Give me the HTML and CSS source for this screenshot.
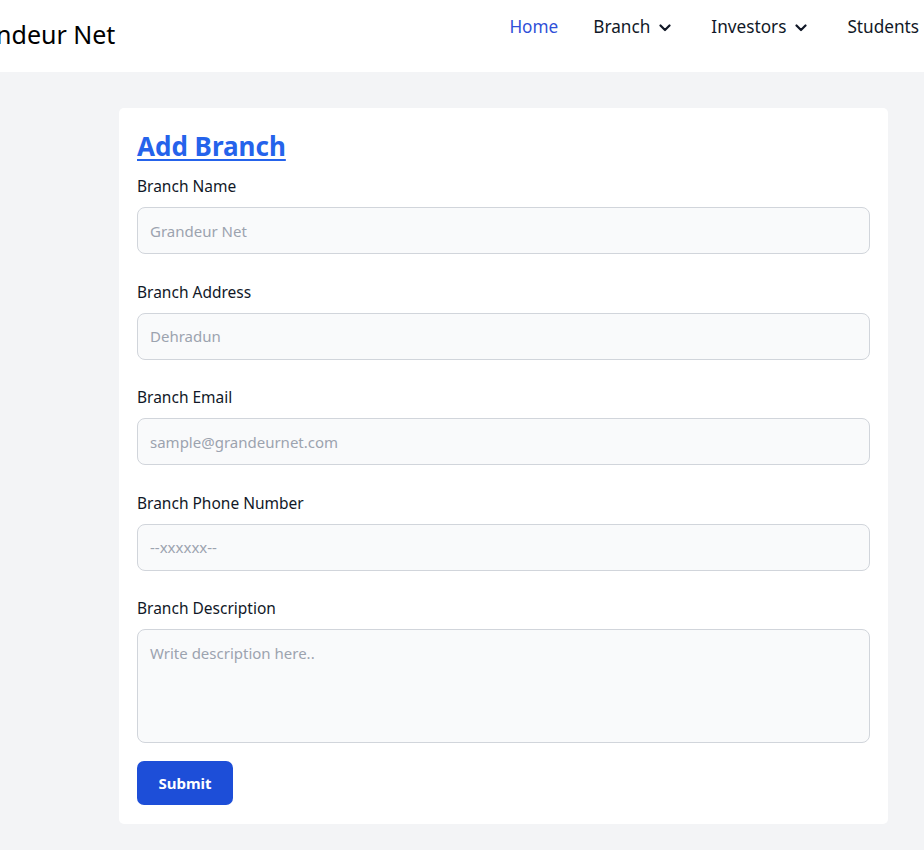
FILE: index.html
```html
<!DOCTYPE html>
<html lang="en">
<head>
<meta charset="utf-8">
<title>Add Branch</title>
<link rel="stylesheet" href="styles.css">
</head>
<body>
<header class="navbar">
  <div class="brand">Grandeur Net</div>
  <nav class="menu">
    <a class="menu-item active" href="#">Home</a>
    <a class="menu-item has-sub" href="#">Branch
      <svg class="chev" viewBox="0 0 12 8" width="12" height="8"><path d="M1.5 1.5 L6 6 L10.5 1.5" fill="none" stroke="currentColor" stroke-width="2.2" stroke-linecap="round" stroke-linejoin="round"/></svg>
    </a>
    <a class="menu-item has-sub" href="#">Investors
      <svg class="chev" viewBox="0 0 12 8" width="12" height="8"><path d="M1.5 1.5 L6 6 L10.5 1.5" fill="none" stroke="currentColor" stroke-width="2.2" stroke-linecap="round" stroke-linejoin="round"/></svg>
    </a>
    <a class="menu-item" href="#">Students</a>
  </nav>
</header>
<main class="page">
  <section class="card">
    <h1 class="title"><a href="#">Add Branch</a></h1>
    <form class="form">
      <div class="field">
        <label class="label">Branch Name</label>
        <input class="input" type="text" placeholder="Grandeur Net">
      </div>
      <div class="field">
        <label class="label">Branch Address</label>
        <input class="input" type="text" placeholder="Dehradun">
      </div>
      <div class="field">
        <label class="label">Branch Email</label>
        <input class="input" type="email" placeholder="sample@grandeurnet.com">
      </div>
      <div class="field">
        <label class="label">Branch Phone Number</label>
        <input class="input" type="text" placeholder="--xxxxxx--">
      </div>
      <div class="field last">
        <label class="label">Branch Description</label>
        <textarea class="input textarea" placeholder="Write description here.."></textarea>
      </div>
      <button class="btn" type="button">Submit</button>
    </form>
  </section>
</main>
</body>
</html>
```
FILE: styles.css
```css
* { box-sizing: border-box; }
html, body { margin: 0; padding: 0; }
body {
  font-family: "Noto Sans", "Open Sans", sans-serif;
  color: #111827;
  background: #ffffff;
  overflow: hidden;
  height: 856px;
}
.navbar {
  height: 72px;
  background: #ffffff;
  display: flex;
  justify-content: space-between;
  align-items: flex-start;
}
.brand {
  margin-left: -46px;
  margin-top: 17px;
  font-size: 25px;
  line-height: 34px;
  color: #000;
}
.menu {
  display: flex;
  align-items: center;
  gap: 35px;
  margin-top: 14px;
  margin-right: 5px;
}
.menu-item {
  display: flex;
  align-items: center;
  gap: 9px;
  font-size: 17.2px;
  line-height: 26px;
  color: #111827;
  text-decoration: none;
  white-space: nowrap;
}
.menu-item.has-sub { padding-right: 5px; }
.menu-item.active { color: #2f4fd8; }
.chev { display: block; margin-top: 1px; }
.page {
  background: #f3f4f6;
  height: 778px;
  padding: 36px 36px 0 119px;
}
.card {
  background: #ffffff;
  border-radius: 5px;
  padding: 21px 18px 19px 18px;
}
.title {
  margin: 0 0 12px 0;
  font-size: 26px;
  line-height: 34px;
  font-weight: 700;
}
.title a { color: #2563eb; text-decoration: underline; text-underline-offset: 3px; text-decoration-thickness: 2px; }
.field { display: flex; flex-direction: column; margin-bottom: 26.5px; }
.field.last { margin-bottom: 18px; }
.label {
  font-size: 15.5px;
  line-height: 22px;
  font-weight: 400;
  margin-bottom: 10px;
  color: #111827;
}
.input {
  height: 47px;
  border: 1px solid #d1d5db;
  border-radius: 8px;
  background: #f9fafb;
  padding: 0 12px;
  font-family: inherit;
  font-size: 15px;
  color: #111827;
  outline: none;
}
.input::placeholder { color: #9ca3af; }
.textarea {
  height: 114px;
  padding: 12px;
  resize: none;
  line-height: 22px;
}
.btn {
  width: 96px;
  height: 44px;
  background: #1d4ed8;
  color: #fff;
  border: none;
  border-radius: 7px;
  font-family: inherit;
  font-size: 15px;
  font-weight: 700;
}
```
